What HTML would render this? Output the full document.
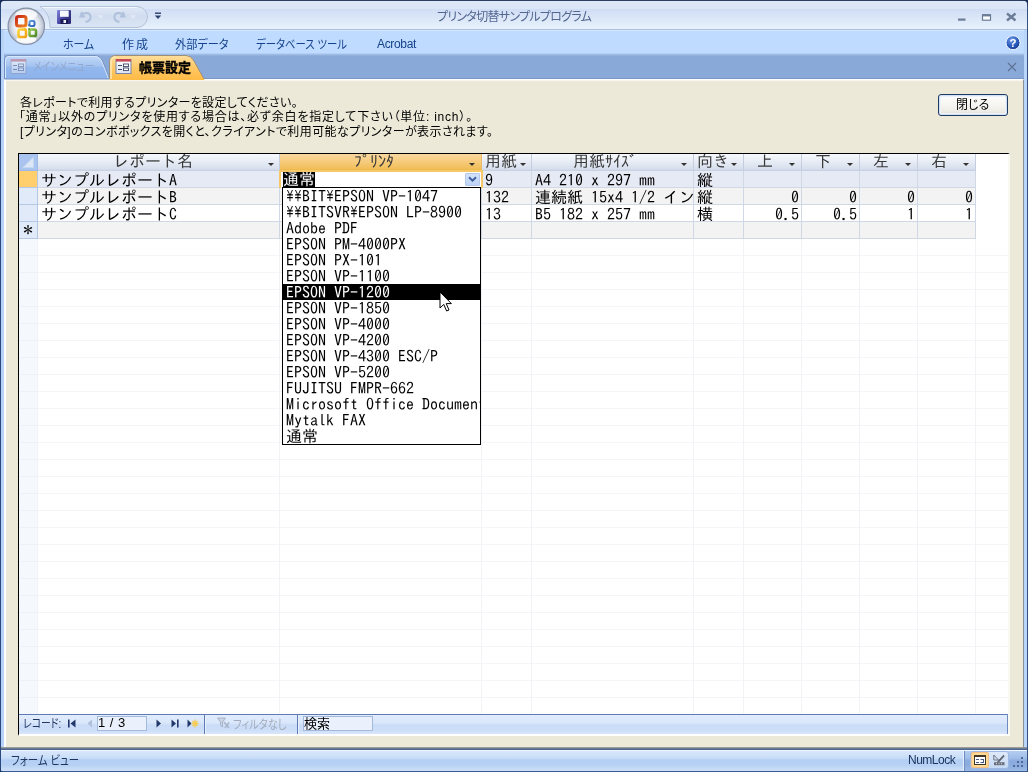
<!DOCTYPE html>
<html lang="ja">
<head>
<meta charset="utf-8">
<title>プリンタ切替サンプルプログラム</title>
<style>
html,body{margin:0;padding:0;}
body{width:1028px;height:772px;overflow:hidden;position:relative;background:#BFDBFF;
 font-family:"Liberation Sans","Noto Sans CJK JP",sans-serif;font-size:12px;color:#000;}
div,span,i{box-sizing:border-box;}
.abs{position:absolute;}
.ui{position:absolute;font-family:"Liberation Sans","Noto Sans CJK JP",sans-serif;font-size:12px;font-feature-settings:"palt";white-space:nowrap;line-height:16px;}
.mono{font-family:"IPAGothic","Liberation Mono",monospace;font-size:16px;line-height:17px;white-space:pre;}
#win{position:absolute;left:0;top:0;width:1028px;height:772px;overflow:hidden;background:#BFDBFF;will-change:transform;}
#title{left:0;top:0;width:1028px;height:31px;background:linear-gradient(#2E3F5F 0px,#2E3F5F 1px,#DDE9F8 1px,#D9E6F7 9px,#CFDDF5 9px,#DBE6F7 18px,#E6F1FD 28px,#E6F1FD 29px,#A9BFDD 29px,#A9BFDD 30px,#D5E7FD 30px,#D5E7FD 31px);}
#menu{left:0;top:31px;width:1028px;height:23px;background:linear-gradient(#BFDBFF 0px,#BFDBFF 22px,#A6C3EC 23px);}
.mtab{top:36px;color:#15428B;}
#tabstrip{left:4px;top:54px;width:1020px;height:25px;background:linear-gradient(#A9C3E8 0px,#89A9D8 2px,#89A9D8 24px,#7797C6 24px);}
#content{left:4px;top:79px;width:1020px;height:668px;background:#ECE9D8;border-left:2px solid #FFFFFF;border-top:1px solid #FFFFFF;border-right:1px solid #8A9099;box-shadow:inset 0 1px 0 #F8F6EE;}
#status{left:0;top:747px;width:1028px;height:25px;background:linear-gradient(#9A9C9A 0px,#9A9C9A 1px,#6A7A92 1px,#6A7A92 2px,#4E668F 2px,#4E668F 3px,#F0F6FE 3px,#F0F6FE 4px,#D9E7FA 4px,#C9DDF8 11px,#B3CFF4 13px,#B6D1F4 18px,#CCDEF7 23px,#CCDEF7 24px,#3D5C95 24px);}
#grid{left:18px;top:153px;width:992px;height:583px;background:#fff;border-left:1px solid #000;border-top:1px solid #000;border-right:2px solid #F9F8F1;border-bottom:2px solid #fff;overflow:hidden;}
.hd{position:absolute;top:0;height:17px;background:linear-gradient(#F7F9FC 0px,#E9EEF6 7px,#D7DFED 15px,#CCD6E6 16px);border-right:1px solid #C4CEDF;border-bottom:1px solid #C9D2E2;text-align:center;color:#3a3a3a;overflow:hidden;}
.hd .mono{position:absolute;top:-1px;line-height:17px;}
.arr{position:absolute;top:9px;width:0;height:0;border-left:3.5px solid transparent;border-right:3.5px solid transparent;border-top:3.5px solid #333;}
.row{position:absolute;left:0;width:957px;height:17px;}
.c{position:absolute;top:0;height:17px;border-right:1px solid #D0D7E5;border-bottom:1px solid #D0D7E5;overflow:hidden;padding-top:1px;}
.c.r{text-align:right;}
#list{left:282px;top:187px;width:199px;height:258px;background:#fff;border:1px solid #000;overflow:hidden;}
#list div{height:16px;line-height:16px;padding-left:3px;}
#list div.sel{background:#000;color:#fff;}
.yen{display:inline-block;width:8px;height:16px;vertical-align:top;overflow:visible;}
.yen span{display:inline-block;width:16px;margin-left:-4px;transform:scaleX(0.62);transform-origin:center;}
#nav{left:19px;top:714px;width:989px;height:20px;background:linear-gradient(#5F7BB5 0px,#5F7BB5 1px,#E1ECFC 1px,#DAE7FB 9px,#CADCF7 11px,#CCDEF8 16px,#D9E6FA 20px);border-right:1px solid #6F8BC2;}
.navbox{position:absolute;top:2px;height:15px;border:1px solid #A3B9DC;background:#EAF1FC;}
.navsep{position:absolute;top:1px;width:2px;height:19px;background:linear-gradient(90deg,#5F7BB5 0px,#5F7BB5 1px,#E8F0FC 1px);}
</style>
</head>
<body>
<div id="win">
<div id="title" class="abs"></div>
<div class="ui" style="left:437px;top:9px;letter-spacing:-0.71px;color:#52668F;">プリンタ切替サンプルプログラム</div>
<div id="menu" class="abs"></div>
<div class="ui" style="left:63px;top:37px;color:#15428B;transform:scaleX(0.909);transform-origin:0 0;">ホーム</div>
<div class="ui" style="left:122px;top:37px;letter-spacing:2.0px;color:#15428B;">作成</div>
<div class="ui" style="left:175px;top:37px;color:#15428B;transform:scaleX(0.929);transform-origin:0 0;">外部データ</div>
<div class="ui" style="left:256px;top:37px;color:#15428B;transform:scaleX(0.865);transform-origin:0 0;">データベース ツール</div>
<div class="ui" style="left:377px;top:36px;letter-spacing:-0.33px;color:#15428B;">Acrobat</div>
<div id="tabstrip" class="abs"></div>
<div id="content" class="abs"></div>
<svg class="abs" style="left:0;top:0" width="170" height="50" viewBox="0 0 170 50"><defs><linearGradient id="pill" x1="0" y1="0" x2="0" y2="1"><stop offset="0" stop-color="#DFE8F6"/><stop offset="0.45" stop-color="#D1DDEF"/><stop offset="1" stop-color="#DAE5F4"/></linearGradient><radialGradient id="orb" cx="0.5" cy="0.5" r="0.5"><stop offset="0" stop-color="#FFFFFF"/><stop offset="0.5" stop-color="#F6F7FA"/><stop offset="0.75" stop-color="#DDE2EA"/><stop offset="0.92" stop-color="#BEC6D4"/><stop offset="1" stop-color="#AEB7C8"/></radialGradient><linearGradient id="sv" x1="0" y1="0" x2="1" y2="0.6"><stop offset="0" stop-color="#8588DC"/><stop offset="0.5" stop-color="#4A4AA6"/><stop offset="1" stop-color="#2B2B74"/></linearGradient><linearGradient id="lr" x1="0" y1="0" x2="1" y2="1"><stop offset="0" stop-color="#C8261A"/><stop offset="1" stop-color="#F08A1E"/></linearGradient><linearGradient id="ly" x1="0" y1="0" x2="1" y2="1"><stop offset="0" stop-color="#FFD83A"/><stop offset="1" stop-color="#F09E12"/></linearGradient><linearGradient id="lg" x1="0" y1="0" x2="1" y2="1"><stop offset="0" stop-color="#9CCB4A"/><stop offset="1" stop-color="#4E8A2C"/></linearGradient><linearGradient id="lb" x1="0" y1="0" x2="1" y2="1"><stop offset="0" stop-color="#5FA0E0"/><stop offset="1" stop-color="#2D63B4"/></linearGradient></defs><path d="M40 6.5 H137 A10.5 10.5 0 0 1 137 27.5 H50 C50 18 47 11 40 6.5 Z" fill="url(#pill)" stroke="#B4C4DB" stroke-width="1"/><path d="M42 7.5 H137" stroke="#F4F8FD" stroke-width="1"/><circle cx="26.3" cy="26.3" r="18.2" fill="url(#orb)" stroke="#8892A6" stroke-width="1.2"/><ellipse cx="26.3" cy="14.5" rx="11" ry="5" fill="#FFFFFF" opacity="0.75"/><ellipse cx="26.3" cy="39.5" rx="10" ry="4" fill="#FFFFFF" opacity="0.85"/><rect x="16.5" y="16.5" width="9.5" height="9.5" rx="2" fill="none" stroke="url(#lr)" stroke-width="3"/><rect x="29.5" y="21" width="5" height="5" rx="1.2" fill="none" stroke="url(#lb)" stroke-width="2"/><rect x="18.5" y="29.5" width="7.5" height="7.5" rx="1.6" fill="none" stroke="url(#ly)" stroke-width="2.6"/><rect x="29.5" y="29.5" width="6.5" height="6.5" rx="1.6" fill="none" stroke="url(#lg)" stroke-width="2.6"/><rect x="24.3" y="24.3" width="1.8" height="1.8" fill="#E0701C"/><rect x="28.2" y="24.3" width="1.8" height="1.8" fill="#2D63B4"/><rect x="24.3" y="28.2" width="1.8" height="1.8" fill="#F4B81E"/><rect x="28.2" y="28.2" width="1.8" height="1.8" fill="#5E9A34"/><rect x="57" y="10" width="14" height="14" rx="1" fill="url(#sv)"/><rect x="60" y="10.5" width="8.7" height="6.3" fill="#F6F8FE"/><rect x="60.5" y="19" width="7.5" height="5" fill="#1B1B55"/><rect x="63.5" y="20" width="2.5" height="3" fill="#EEF0FA"/><path d="M82 12 L80.5 16.5 L85 16.5 M81.5 16 C84 12 90 12 90.5 16.5 C90.8 19.5 88.5 21.5 85.5 22" fill="none" stroke="#AFC1DC" stroke-width="2"/><path d="M97.5 15.3 L103.5 15.3 L100.5 18.8 Z" fill="#E3E9F3"/><path d="M123 12 L124.5 16.5 L120 16.5 M123.5 16 C121 12 115 12 114.5 16.5 C114.2 19.5 116.5 21.5 119.5 22" fill="none" stroke="#AFC1DC" stroke-width="2"/><path d="M130 15.3 L136 15.3 L133 18.8 Z" fill="#E3E9F3"/><rect x="155" y="12.5" width="6" height="1.4" fill="#2B3F6E"/><path d="M154.8 15.5 L161.2 15.5 L158 19 Z" fill="#2B3F6E"/></svg>
<svg class="abs" style="left:950px;top:8px" width="74" height="18" viewBox="950 8 74 18"><rect x="958" y="18.5" width="7.5" height="2.2" fill="#6C7D98"/><rect x="982.5" y="14.8" width="8" height="5.4" fill="#FDFEFF" stroke="#6C7D98" stroke-width="1.2"/><rect x="982" y="14.2" width="9" height="2.2" fill="#6C7D98"/><path d="M1007 13.5 L1015.5 20.5 M1015.5 13.5 L1007 20.5" stroke="#6C7D98" stroke-width="2.4"/></svg>
<svg class="abs" style="left:1004px;top:34px" width="18" height="18" viewBox="0 0 18 18"><defs><radialGradient id="hg" cx="0.4" cy="0.3" r="0.8"><stop offset="0" stop-color="#6E9BE6"/><stop offset="0.6" stop-color="#2456B8"/><stop offset="1" stop-color="#15337F"/></radialGradient></defs><circle cx="9" cy="8.7" r="7" fill="url(#hg)" stroke="#F2F6FD" stroke-width="1"/><text x="9" y="13" text-anchor="middle" font-family="Liberation Sans,sans-serif" font-weight="bold" font-size="11.5" fill="#FFFFFF">?</text></svg>
<svg class="abs" style="left:1006px;top:61px" width="12" height="12"><path d="M2 2 L10 10 M10 2 L2 10" stroke="#5F7396" stroke-width="1.3"/></svg>
<svg class="abs" style="left:0;top:54px" width="230" height="26" viewBox="0 54 230 26"><defs><linearGradient id="t1" x1="0" y1="0" x2="0" y2="1"><stop offset="0" stop-color="#C2D8F7"/><stop offset="0.45" stop-color="#A5C4F1"/><stop offset="0.5" stop-color="#93B8EE"/><stop offset="1" stop-color="#8DB3EC"/></linearGradient><linearGradient id="t2" x1="0" y1="0" x2="0" y2="1"><stop offset="0" stop-color="#FFDE9C"/><stop offset="0.5" stop-color="#FFC966"/><stop offset="1" stop-color="#FFBA44"/></linearGradient><linearGradient id="ic" x1="0" y1="0" x2="0" y2="1"><stop offset="0" stop-color="#FFFFFF"/><stop offset="1" stop-color="#DCE3F3"/></linearGradient></defs><path d="M4.5 79 V60 Q4.5 55.5 9 55.5 H95 Q100 55.5 102.5 61 L109.5 79 Z" fill="url(#t1)" stroke="#7390C0" stroke-width="1"/><path d="M5.5 78 V60 Q5.5 56.5 9 56.5 H95 Q99.5 56.5 101.7 61.5 L108.3 78" fill="none" stroke="#D6E6FB" stroke-width="1"/><path d="M109.5 80 V61 Q110 55.5 116 55.5 H186 Q191 55.5 194 61 L204.5 80 Z" fill="url(#t2)"/><path d="M109.5 79 V61 Q110 55.5 116 55.5 H186 Q191 55.5 194 61 L204 79" fill="none" stroke="#9C8F78" stroke-width="1"/><path d="M111 79 V61 Q111.5 57 116 57" fill="none" stroke="#FFE9B8" stroke-width="1.5"/><g opacity="0.55"><rect x="11" y="59.5" width="15" height="14" fill="url(#ic)" stroke="#8C97B8" stroke-width="1"/><rect x="11" y="59" width="15" height="2.6" fill="#C46A78"/><path d="M13 65.5 H17 M13 69.5 H17" stroke="#5A6585" stroke-width="1"/><rect x="18.5" y="64" width="5" height="2.6" fill="#fff" stroke="#5A6585" stroke-width="0.9"/><rect x="18.5" y="68" width="5" height="2.6" fill="#fff" stroke="#5A6585" stroke-width="0.9"/></g><g><rect x="116" y="59.5" width="15" height="14" fill="url(#ic)" stroke="#7C86A8" stroke-width="1"/><rect x="116" y="59" width="15" height="2.6" fill="#C4485A"/><path d="M118 65.5 H122 M118 69.5 H122" stroke="#3E4868" stroke-width="1"/><rect x="123.5" y="64" width="5" height="2.6" fill="#fff" stroke="#3E4868" stroke-width="0.9"/><rect x="123.5" y="68" width="5" height="2.6" fill="#fff" stroke="#3E4868" stroke-width="0.9"/></g></svg>
<div class="ui" style="left:33px;top:59px;color:#93A8CE;transform:scaleX(0.822);transform-origin:0 0;">メインメニュー</div>
<div class="ui" style="left:139px;top:60px;font-weight:bold;font-size:13px;-webkit-text-stroke:0.35px #000;">帳票設定</div>
<div class="ui" style="left:20px;top:95px;letter-spacing:0.33px;">各レポートで利用するプリンターを設定してください。</div>
<div class="ui" style="left:19px;top:109px;letter-spacing:0.79px;">「通常」以外のプリンタを使用する場合は、必ず余白を指定して下さい（単位: inch）。</div>
<div class="ui" style="left:20px;top:124px;letter-spacing:0.4px;">[プリンタ]のコンボボックスを開くと、クライアントで利用可能なプリンターが表示されます。</div>
<div class="abs" style="left:938px;top:94px;width:70px;height:22px;border:1px solid #1F3A63;border-radius:3px;background:linear-gradient(#FEFEFD 0px,#F6F5F1 10px,#EEEDE7 16px,#DFDCD2 20px);box-shadow:inset 0 0 0 1px #D3E1F5, inset 0 0 0 2px #EEF3FA"></div><div class="ui" style="left:956px;top:97px;">閉じる</div>
<div id="status" class="abs"></div>
<div class="ui" style="left:11px;top:753px;color:#1E3560;transform:scaleX(0.868);transform-origin:0 0;">フォーム ビュー</div>
<div class="ui" style="left:908px;top:752px;letter-spacing:-0.5px;color:#1E3560;">NumLock</div>
<div class="abs" style="left:963px;top:751px;width:1px;height:20px;background:#E6F0FC"></div>
<div class="abs" style="left:964px;top:751px;width:1px;height:20px;background:#6F8FC2"></div>
<div class="abs" style="left:965px;top:751px;width:62px;height:20px;background:linear-gradient(#B4CDF0 0px,#A0BEE9 7px,#8AABDD 10px,#8CADDE 15px,#9DBBE6 20px)"></div>
<div class="abs" style="left:970px;top:751px;width:39px;height:18px;border:1px solid #9DB9E3;border-radius:3px;background:linear-gradient(#DDE9FA,#C6DAF6)"></div>
<div class="abs" style="left:971px;top:752px;width:18px;height:16px;border:1px solid #F0BE86;border-radius:2px;background:radial-gradient(ellipse at 50% 50%,#FFEBC0 0%,#FFDA92 70%,#FFD080 100%)"></div>
<svg class="abs" style="left:974px;top:755px" width="12" height="10"><rect x="0.5" y="0.5" width="11" height="9" fill="#FFFFFF" stroke="#3F3628" stroke-width="1"/><rect x="0" y="0" width="12" height="2" fill="#3F3628"/><path d="M2 4.5 H5 M2 7.5 H5 M6.5 4.5 H10 M6.5 7.5 H10 M9.5 4.5 V7.5" stroke="#4A5A8A" stroke-width="1" fill="none"/></svg>
<svg class="abs" style="left:993px;top:754px" width="12" height="12"><path d="M0.8 1 L0.8 6 L5.5 6 Z" fill="none" stroke="#6E7480" stroke-width="1"/><path d="M10.5 0.8 L4.5 7.2 L4 9 L5.8 8.4 L11.6 2.2 Z" fill="#5F646E"/><rect x="1" y="8.2" width="10.5" height="3" fill="#6A6F7A"/><path d="M3 9.7 H4 M5.5 9.7 H6.5 M8 9.7 H9" stroke="#D5DCEA" stroke-width="1"/></svg>
<svg class="abs" style="left:1013px;top:757px" width="11" height="11"><rect x="8" y="0" width="2" height="2" fill="#4F6A9B"/><rect x="4" y="4" width="2" height="2" fill="#4F6A9B"/><rect x="8" y="4" width="2" height="2" fill="#4F6A9B"/><rect x="0" y="8" width="2" height="2" fill="#4F6A9B"/><rect x="4" y="8" width="2" height="2" fill="#4F6A9B"/><rect x="8" y="8" width="2" height="2" fill="#4F6A9B"/></svg>
<div id="grid" class="abs">
<div class="abs" style="left:0;top:0;width:19px;height:17px;background:#A9C4EE;border-right:1px solid #9DB8E4;border-bottom:1px solid #9DB8E4"><svg class="abs" style="left:3px;top:2px" width="13" height="13"><path d="M1 11.5 L11.5 11.5 L11.5 1 Z" fill="#DCE7F6" stroke="#C4D6F1" stroke-width="1"/></svg></div>
<div class="hd" style="left:19px;width:242px;"><span class="mono" style="left:75px">レポート名</span><i class="arr" style="left:230px"></i></div>
<div class="hd" style="left:261px;width:202px;background:linear-gradient(#F9D9A0 0px,#F6CC7F 7px,#F1BE58 15px,#EDB64A 16px);border-right-color:#E9BC6A;border-bottom-color:#F3C570;"><span class="mono" style="left:74px">ﾌﾟﾘﾝﾀ</span><i class="arr" style="left:189px"></i></div>
<div class="hd" style="left:463px;width:50px;"><span class="mono" style="left:3px">用紙</span><i class="arr" style="left:38px"></i></div>
<div class="hd" style="left:513px;width:162px;"><span class="mono" style="left:41px">用紙ｻｲｽﾞ</span><i class="arr" style="left:149px"></i></div>
<div class="hd" style="left:675px;width:50px;"><span class="mono" style="left:3px">向き</span><i class="arr" style="left:37px"></i></div>
<div class="hd" style="left:725px;width:58px;"><span class="mono" style="left:13px">上</span><i class="arr" style="left:45px"></i></div>
<div class="hd" style="left:783px;width:58px;"><span class="mono" style="left:13px">下</span><i class="arr" style="left:45px"></i></div>
<div class="hd" style="left:841px;width:58px;"><span class="mono" style="left:13px">左</span><i class="arr" style="left:45px"></i></div>
<div class="hd" style="left:899px;width:58px;"><span class="mono" style="left:13px">右</span><i class="arr" style="left:45px"></i></div>
<div class="row" style="top:17px">
<div class="c" style="left:0;width:19px;background:#FFCF6E;border-right-color:#B4C8E6;border-bottom-color:#B4C8E6"></div>
<div class="c mono" style="left:19px;width:242px;background:#E6EAF5;padding-left:3px;">サンプルレポートA</div>
<div class="c mono" style="left:261px;width:202px;background:#E6EAF5;padding-left:3px;"></div>
<div class="c mono" style="left:463px;width:50px;background:#E6EAF5;padding-left:3px;">9</div>
<div class="c mono" style="left:513px;width:162px;background:#E6EAF5;padding-left:3px;">A4 210 x 297 mm</div>
<div class="c mono" style="left:675px;width:50px;background:#E6EAF5;padding-left:3px;">縦</div>
<div class="c r mono" style="left:725px;width:58px;background:#E6EAF5;padding-right:2px;"></div>
<div class="c r mono" style="left:783px;width:58px;background:#E6EAF5;padding-right:2px;"></div>
<div class="c r mono" style="left:841px;width:58px;background:#E6EAF5;padding-right:2px;"></div>
<div class="c r mono" style="left:899px;width:58px;background:#E6EAF5;padding-right:2px;"></div>
</div>
<div class="row" style="top:34px">
<div class="c" style="left:0;width:19px;background:#E1EAF8;border-right-color:#B4C8E6;border-bottom-color:#B4C8E6"></div>
<div class="c mono" style="left:19px;width:242px;background:#F3F3F3;padding-left:3px;">サンプルレポートB</div>
<div class="c mono" style="left:261px;width:202px;background:#F3F3F3;padding-left:3px;"></div>
<div class="c mono" style="left:463px;width:50px;background:#F3F3F3;padding-left:3px;">132</div>
<div class="c mono" style="left:513px;width:162px;background:#F3F3F3;padding-left:3px;">連続紙 15x4 1/2 イン</div>
<div class="c mono" style="left:675px;width:50px;background:#F3F3F3;padding-left:3px;">縦</div>
<div class="c r mono" style="left:725px;width:58px;background:#F3F3F3;padding-right:2px;">0</div>
<div class="c r mono" style="left:783px;width:58px;background:#F3F3F3;padding-right:2px;">0</div>
<div class="c r mono" style="left:841px;width:58px;background:#F3F3F3;padding-right:2px;">0</div>
<div class="c r mono" style="left:899px;width:58px;background:#F3F3F3;padding-right:2px;">0</div>
</div>
<div class="row" style="top:51px">
<div class="c" style="left:0;width:19px;background:#E1EAF8;border-right-color:#B4C8E6;border-bottom-color:#B4C8E6"></div>
<div class="c mono" style="left:19px;width:242px;background:#FFFFFF;padding-left:3px;">サンプルレポートC</div>
<div class="c mono" style="left:261px;width:202px;background:#FFFFFF;padding-left:3px;"></div>
<div class="c mono" style="left:463px;width:50px;background:#FFFFFF;padding-left:3px;">13</div>
<div class="c mono" style="left:513px;width:162px;background:#FFFFFF;padding-left:3px;">B5 182 x 257 mm</div>
<div class="c mono" style="left:675px;width:50px;background:#FFFFFF;padding-left:3px;">横</div>
<div class="c r mono" style="left:725px;width:58px;background:#FFFFFF;padding-right:2px;">0.5</div>
<div class="c r mono" style="left:783px;width:58px;background:#FFFFFF;padding-right:2px;">0.5</div>
<div class="c r mono" style="left:841px;width:58px;background:#FFFFFF;padding-right:2px;">1</div>
<div class="c r mono" style="left:899px;width:58px;background:#FFFFFF;padding-right:2px;">1</div>
</div>
<div class="row" style="top:68px">
<div class="c" style="left:0;width:19px;background:#E1EAF8;border-right-color:#B4C8E6;border-bottom-color:#B4C8E6"><span class="mono" style="position:absolute;left:2px;top:0px;line-height:17px;font-size:14px">＊</span></div>
<div class="c mono" style="left:19px;width:242px;background:#F3F3F3;padding-left:3px;"></div>
<div class="c mono" style="left:261px;width:202px;background:#F3F3F3;padding-left:3px;"></div>
<div class="c mono" style="left:463px;width:50px;background:#F3F3F3;padding-left:3px;"></div>
<div class="c mono" style="left:513px;width:162px;background:#F3F3F3;padding-left:3px;"></div>
<div class="c mono" style="left:675px;width:50px;background:#F3F3F3;padding-left:3px;"></div>
<div class="c r mono" style="left:725px;width:58px;background:#F3F3F3;padding-right:2px;"></div>
<div class="c r mono" style="left:783px;width:58px;background:#F3F3F3;padding-right:2px;"></div>
<div class="c r mono" style="left:841px;width:58px;background:#F3F3F3;padding-right:2px;"></div>
<div class="c r mono" style="left:899px;width:58px;background:#F3F3F3;padding-right:2px;"></div>
</div>
<div class="abs" style="left:0;top:85px;width:989px;height:475px;background:repeating-linear-gradient(#fff 0px,#fff 16px,#F4F5F8 16px,#F4F5F8 17px)"></div>
<div class="abs" style="left:0;top:85px;width:18px;height:475px;background:rgba(225,234,248,0.35)"></div>
<div class="abs" style="left:18px;top:85px;width:1px;height:475px;background:#F1F3F7"></div>
<div class="abs" style="left:260px;top:85px;width:1px;height:475px;background:#F1F3F7"></div>
<div class="abs" style="left:462px;top:85px;width:1px;height:475px;background:#F1F3F7"></div>
<div class="abs" style="left:512px;top:85px;width:1px;height:475px;background:#F1F3F7"></div>
<div class="abs" style="left:674px;top:85px;width:1px;height:475px;background:#F1F3F7"></div>
<div class="abs" style="left:724px;top:85px;width:1px;height:475px;background:#F1F3F7"></div>
<div class="abs" style="left:782px;top:85px;width:1px;height:475px;background:#F1F3F7"></div>
<div class="abs" style="left:840px;top:85px;width:1px;height:475px;background:#F1F3F7"></div>
<div class="abs" style="left:898px;top:85px;width:1px;height:475px;background:#F1F3F7"></div>
<div class="abs" style="left:956px;top:85px;width:1px;height:475px;background:#F1F3F7"></div>
<div class="abs" style="left:260px;top:16px;width:204px;height:18px;border:2px solid #F6C867;border-top-width:2px;border-bottom:0;background:#fff"></div>
<div class="abs mono" style="left:264px;top:18px;width:32px;height:15px;line-height:15px;background:#000;color:#fff;overflow:hidden">通常</div>
<div class="abs" style="left:446px;top:19px;width:15px;height:13px;border:1px solid #B4C8EC;background:linear-gradient(#D3E2FA,#BED3F6);border-radius:1px"><svg class="abs" style="left:2px;top:2px" width="9" height="7"><path d="M1 1.2 L4.5 4.6 L8 1.2" fill="none" stroke="#3F5FA0" stroke-width="2"/></svg></div>
</div>
<div id="nav" class="abs">
<div class="ui" style="left:4px;top:2px;color:#1E3560;transform:scaleX(0.818);transform-origin:0 0;">レコード:</div>
<svg class="abs" style="left:49px;top:5px" width="8" height="9"><rect x="0" y="0.5" width="1.6" height="8" fill="#22386A"/><path d="M7.5 0.5 L2.5 4.5 L7.5 8.5 Z" fill="#22386A"/></svg>
<svg class="abs" style="left:68px;top:5px" width="6" height="9"><path d="M5 0.5 L0.5 4.5 L5 8.5 Z" fill="#AFC0DA"/></svg>
<div class="navbox" style="left:78px;width:50px"></div>
<div class="ui" style="left:79px;top:1px;letter-spacing:0.5px;font-size:13px;">1 / 3</div>
<svg class="abs" style="left:137px;top:5px" width="6" height="9"><path d="M0.5 0.5 L5 4.5 L0.5 8.5 Z" fill="#22386A"/></svg>
<svg class="abs" style="left:152px;top:5px" width="8" height="9"><path d="M0.5 0.5 L5 4.5 L0.5 8.5 Z" fill="#22386A"/><rect x="6" y="0.5" width="1.6" height="8" fill="#22386A"/></svg>
<svg class="abs" style="left:168px;top:4px" width="12" height="11"><path d="M0.5 1.5 L4.5 5.5 L0.5 9.5 Z" fill="#22386A"/><g stroke="#F5CC55" stroke-width="1.3"><path d="M8 1.5 V9.5 M4.5 5.5 H11.5 M5.5 3 L10.5 8 M10.5 3 L5.5 8"/></g></svg>
<div class="navsep" style="left:185px"></div>
<svg class="abs" style="left:198px;top:3px" width="14" height="13"><path d="M0.5 1 H8.5 L5.5 5 V10 L3.5 8.5 V5 Z" fill="#C9D3E4" stroke="#A9B4C8"/><path d="M7 5 L12 11 M12 5.5 L8 11" stroke="#A9B4C8" stroke-width="1.5" fill="none"/></svg>
<div class="ui" style="left:214px;top:3px;color:#A3ACBC;transform:scaleX(0.852);transform-origin:0 0;">フィルタなし</div>
<div class="navsep" style="left:278px"></div>
<div class="navbox" style="left:284px;width:70px"></div>
<div class="ui" style="left:285px;top:2px;font-size:13px;">検索</div>
</div>
<div id="list" class="abs mono"><div><span class="yen"><span>¥</span></span><span class="yen"><span>¥</span></span>BIT<span class="yen"><span>¥</span></span>EPSON VP-1047</div><div><span class="yen"><span>¥</span></span><span class="yen"><span>¥</span></span>BITSVR<span class="yen"><span>¥</span></span>EPSON LP-8900</div><div>Adobe PDF</div><div>EPSON PM-4000PX</div><div>EPSON PX-101</div><div>EPSON VP-1100</div><div class="sel">EPSON VP-1200</div><div>EPSON VP-1850</div><div>EPSON VP-4000</div><div>EPSON VP-4200</div><div>EPSON VP-4300 ESC/P</div><div>EPSON VP-5200</div><div>FUJITSU FMPR-662</div><div>Microsoft Office Document Image Writer</div><div>Mytalk FAX</div><div>通常</div></div>
<svg class="abs" style="left:439px;top:291px" width="14" height="22" viewBox="0 0 14 22"><path d="M1 1 V17 L4.8 13.4 L7.6 20 L10 19 L7.2 12.6 H12.4 Z" fill="#fff" stroke="#000" stroke-width="1" stroke-linejoin="miter"/></svg>
<div class="abs" style="left:0;top:30px;width:4px;height:717px;background:linear-gradient(90deg,#27467F 0px,#27467F 1px,#B4D0F6 1px,#BCD6F8 4px)"></div>
<div class="abs" style="left:1024px;top:30px;width:4px;height:717px;background:linear-gradient(90deg,#BAD5FA 0px,#BAD5FA 3px,#34507F 3px)"></div>
<div class="abs" style="left:0;top:0;width:1px;height:772px;background:#2A497F"></div>
<div class="abs" style="left:1027px;top:0;width:1px;height:772px;background:#34507F"></div>
<svg class="abs" style="left:0;top:767px" width="5" height="5"><path d="M0 0 Q0 5 5 5 H0 Z" fill="#1D3A70"/></svg>
<svg class="abs" style="left:0;top:0" width="7" height="7"><path d="M0 0 H7 Q0 0 0 7 Z" fill="#1A2F57"/></svg>
<svg class="abs" style="left:1021px;top:0" width="7" height="7"><path d="M7 0 H0 Q7 0 7 7 Z" fill="#1A2F57"/></svg>
</div>
</body>
</html>
